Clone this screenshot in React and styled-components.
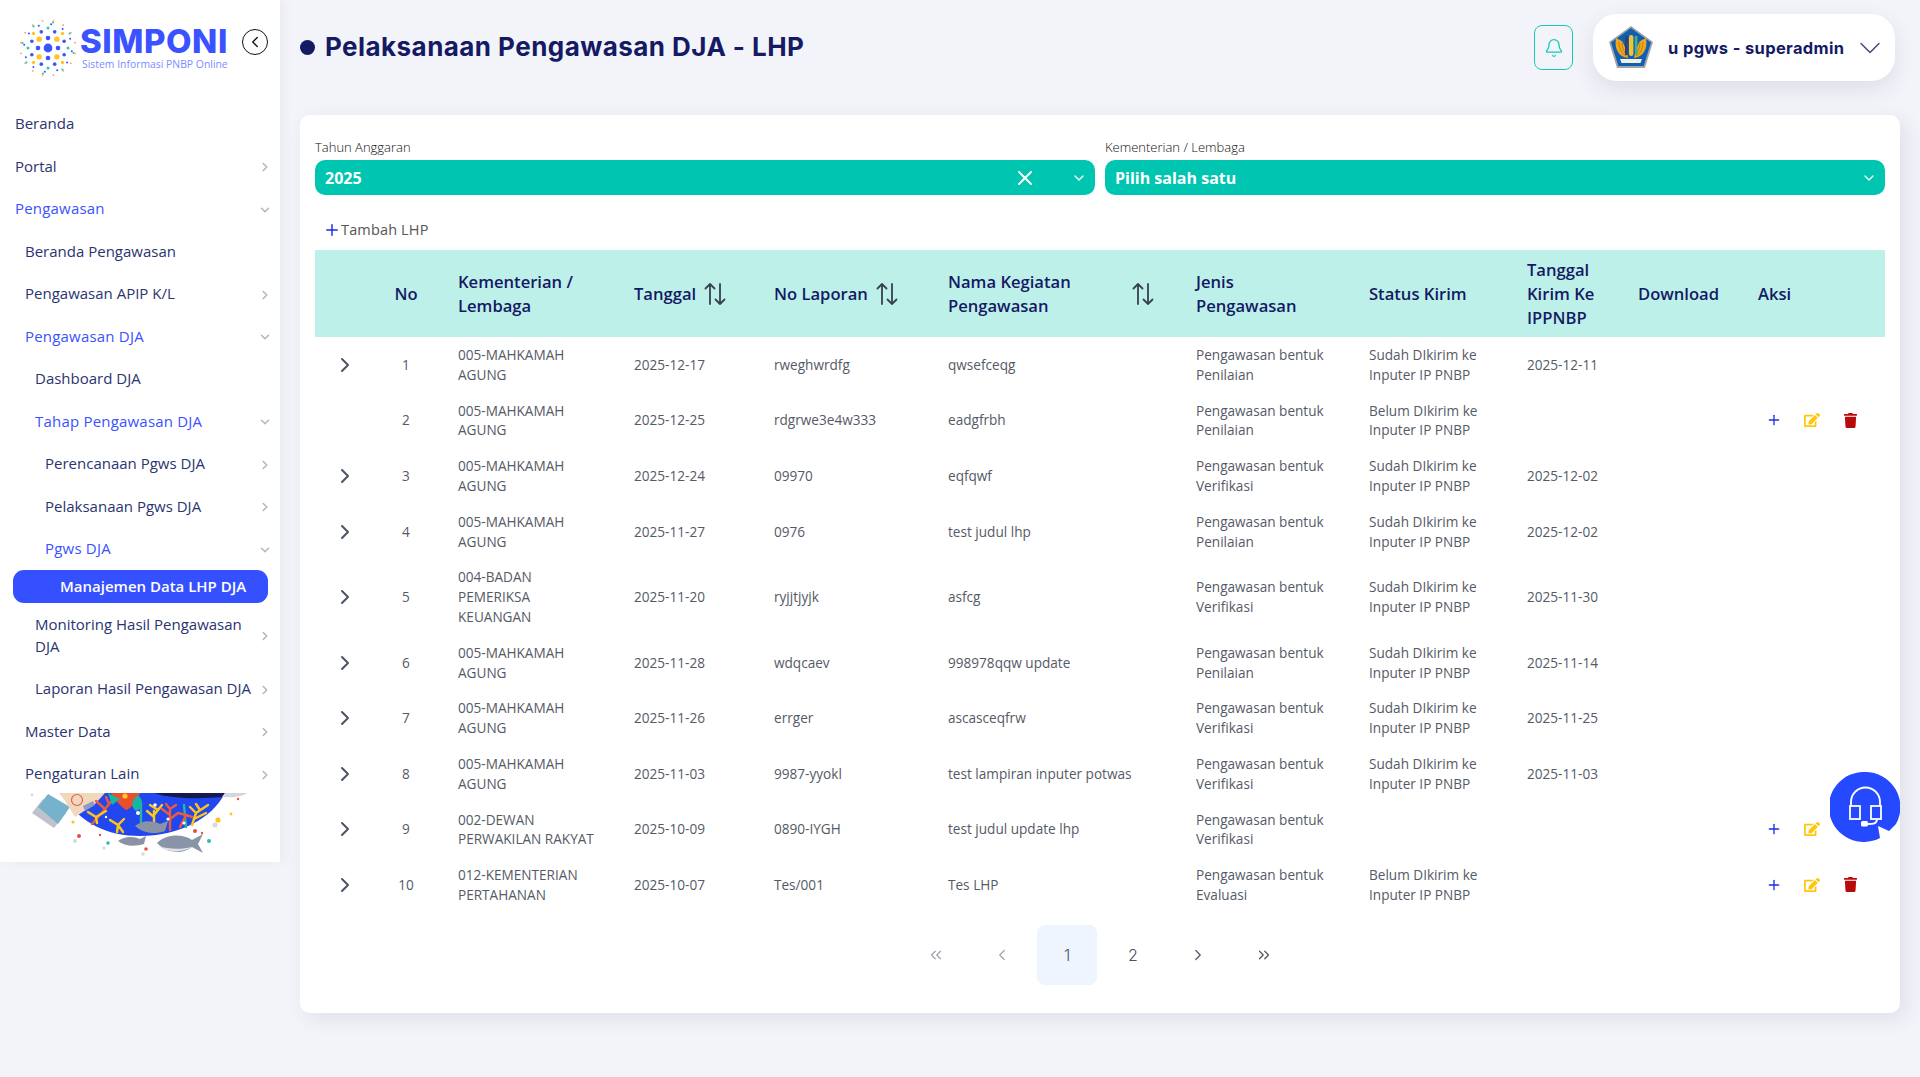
import React from 'react';
import styled, { createGlobalStyle } from 'styled-components';
import { Bell, ChevronDown, ChevronLeft, ChevronRight, ChevronsLeft, ChevronsRight, Plus, X } from 'lucide-react';
import { FaEdit, FaTrash } from 'react-icons/fa';

const GlobalStyle = createGlobalStyle`
  html, body {
    margin: 0;
    padding: 0;
    background: #f3f4f9;
    font-family: "Open Sans", "Liberation Sans", sans-serif;
  }
  * { box-sizing: border-box; }
`;

const Page = styled.div`
  position: relative;
  display: flex;
  align-items: flex-start;
  height: 1077px;
  overflow: hidden;
`;

const Sidebar = styled.aside`
  width: 280px;
  height: 862px;
  flex-shrink: 0;
  overflow: hidden;
  background: #fff;
  box-shadow: 4px 0 10px rgba(40, 50, 110, 0.05);
`;

const LogoRow = styled.div`
  display: flex;
  align-items: flex-start;
  height: 102px;
  padding: 18px 0 0 18px;
`;

const LogoText = styled.div`
  margin-left: 2px;
  width: 149px;
`;

const LogoTitle = styled.div`
  color: #3a52ff;
  font: 800 33px/32px Inter, "Liberation Sans", sans-serif;
  letter-spacing: 0.55px;
  margin-top: 7px;
`;

const LogoSub = styled.div`
  color: #7c8dff;
  font: 400 10.4px/14px "Open Sans", sans-serif;
  white-space: nowrap;
  margin-left: 2px;
`;

const BackButton = styled.button`
  width: 26px;
  height: 26px;
  margin: 11px 0 0 13px;
  padding: 0;
  border: 1.5px solid #111;
  border-radius: 50%;
  background: #fff;
  display: flex;
  align-items: center;
  justify-content: center;
  color: #111;
`;

const NavItem = styled.div`
  display: flex;
  align-items: center;
  justify-content: space-between;
  padding: 10.25px 8px 10.25px ${p => 15 + p.$level * 10}px;
  font-size: 15px;
  line-height: 22px;
  color: ${p => (p.$open ? '#3a52ff' : '#2b3470')};
  font-weight: ${p => (p.$open ? 500 : 400)};
  letter-spacing: ${p => (p.$open ? '0.2px' : '0')};
  svg { color: #b4b6be; flex-shrink: 0; margin: 3px 0 0 4px; }
`;

const NavText = styled.span`
  max-width: ${p => (p.$wrap ? '215px' : 'none')};
  white-space: ${p => (p.$wrap ? 'normal' : 'nowrap')};
`;

const ActiveItem = styled.div`
  margin: 0 12px 0 13px;
  height: 33px;
  padding-left: 47px;
  border-radius: 11px;
  background: #3550ff;
  color: #fff;
  font-size: 15px;
  font-weight: 600;
  line-height: 33px;
`;

const Illustration = styled.svg`
  display: block;
  width: 280px;
  height: 67px;
  margin-top: -2px;
`;

const Main = styled.main`
  flex: 1;
  padding: 0 20px 0 20px;
  min-width: 0;
`;

const TopBar = styled.header`
  display: flex;
  align-items: center;
  height: 115px;
  padding: 0 5px 20px 0;
`;

const Dot = styled.span`
  width: 15px;
  height: 15px;
  border-radius: 50%;
  background: #141a63;
  margin-right: 10px;
`;

const PageTitle = styled.h1`
  flex: 1;
  margin: -2px 0 0;
  color: #141a63;
  font: 700 26px/32px Inter, "Liberation Sans", sans-serif;
  letter-spacing: 0.45px;
`;

const BellButton = styled.button`
  width: 39px;
  height: 45px;
  padding: 0;
  border: 1px solid #14ccb6;
  border-radius: 8px;
  background: transparent;
  color: #14ccb6;
  display: flex;
  align-items: center;
  justify-content: center;
  margin: 0 20px 0 0;
`;

const Profile = styled.div`
  width: 302px;
  height: 67px;
  display: flex;
  align-items: center;
  padding: 0 15px;
  border-radius: 24px;
  background: #fff;
  box-shadow: 0 8px 22px rgba(60, 70, 120, 0.12);
  color: #141a63;
`;

const ProfileName = styled.span`
  flex: 1;
  margin-left: 14px;
  font: 700 16.5px/22px Inter, "Liberation Sans", sans-serif;
  letter-spacing: 0.35px;
  white-space: nowrap;
`;

const ProfileChevron = styled(ChevronDown)`
  margin: 0 -8px 0 -12px;
  flex-shrink: 0;
`;

const Card = styled.section`
  width: 1600px;
  height: 898px;
  padding: 25px 15px 0;
  border-radius: 10px;
  background: #fff;
  box-shadow: 6px 6px 20px rgba(50, 60, 110, 0.1);
`;

const Filters = styled.div`
  display: grid;
  grid-template-columns: 1fr 1fr;
  gap: 10px;
`;

const FieldLabel = styled.label`
  display: block;
  margin-bottom: 5px;
  font-size: 13px;
  font-weight: 300;
  line-height: 15px;
  color: #111;
`;

const Select = styled.div`
  height: 35px;
  display: flex;
  align-items: center;
  padding: 0 8px 0 10px;
  border-radius: 10px;
  background: #00c5b0;
  color: #fff;
  font-size: 16px;
  font-weight: 700;
`;

const SelectValue = styled.span`
  flex: 1;
`;

const ClearIcon = styled(X)`
  margin-right: 34px;
`;

const AddButton = styled.div`
  display: flex;
  align-items: center;
  height: 55px;
  padding: 14px 0 0 8px;
  color: #555;
  font-size: 14.5px;
  letter-spacing: 0.15px;
  svg { color: #1a2fe8; }
`;

const Table = styled.table`
  width: 1570px;
  border-collapse: collapse;
  table-layout: fixed;
`;

const HeadRow = styled.tr`
  background: #bef0ea;
  height: 87px;
`;

const Th = styled.th`
  padding: 0 8px;
  text-align: ${p => (p.$center ? 'center' : 'left')};
  color: #141a63;
  font-size: 16.6px;
  font-weight: 600;
  line-height: 24px;
`;

const SortHead = styled.div`
  display: flex;
  align-items: center;
  gap: 7px;
  width: ${p => (p.$wide ? '207px' : 'auto')};
  justify-content: ${p => (p.$wide ? 'space-between' : 'flex-start')};
  white-space: ${p => (p.$wide ? 'normal' : 'nowrap')};
  svg { flex-shrink: 0; }
`;

const Td = styled.td`
  padding: 8px ${p => (p.$narrow ? '28px' : '8px')} 8px 8px;
  text-align: ${p => (p.$center ? 'center' : 'left')};
  color: #555a66;
  font-size: 13.6px;
  line-height: 19.8px;
`;

const ExpandCell = styled.td`
  padding: 0 0 0 18px;
  color: #4b5563;
  line-height: 0;
`;

const Actions = styled.div`
  display: flex;
  align-items: center;
  gap: 22px;
  padding-left: 8px;
`;

const IconBtn = styled.span`
  display: inline-flex;
  width: 16px;
  justify-content: center;
  color: ${p => p.$color};
`;

const Pagination = styled.nav`
  display: flex;
  justify-content: center;
  gap: 5.6px;
  margin-top: 12px;
`;

const PageButton = styled.button`
  width: 60px;
  height: 60px;
  padding: 0;
  border: 0;
  border-radius: 8px;
  background: ${p => (p.$active ? '#eef5fe' : 'transparent')};
  color: ${p => (p.$disabled ? '#9ca3af' : '#4b5563')};
  font: 300 16px/60px Inter, sans-serif;
  display: flex;
  align-items: center;
  justify-content: center;
`;

const HelpButton = styled.svg`
  position: absolute;
  left: 1830px;
  top: 772px;
  width: 70px;
  height: 70px;
`;

const nav1 = [
  ['Beranda', 0, null],
  ['Portal', 0, 'r'],
  ['Pengawasan', 0, 'd', true],
  ['Beranda Pengawasan', 1, null],
  ['Pengawasan APIP K/L', 1, 'r'],
  ['Pengawasan DJA', 1, 'd', true],
  ['Dashboard DJA', 2, null],
  ['Tahap Pengawasan DJA', 2, 'd', true],
  ['Perencanaan Pgws DJA', 3, 'r'],
  ['Pelaksanaan Pgws DJA', 3, 'r'],
  ['Pgws DJA', 3, 'd', true],
];

const nav2 = [
  ['Monitoring Hasil Pengawasan DJA', 2, 'r', false, true],
  ['Laporan Hasil Pengawasan DJA', 2, 'r'],
  ['Master Data', 1, 'r'],
  ['Pengaturan Lain', 1, 'r'],
];

const rows = [
  { no: 1, kl: '005-MAHKAMAH AGUNG', tgl: '2025-12-17', lap: 'rweghwrdfg', nama: 'qwsefceqg', jenis: 'Penilaian', status: 'Sudah DIkirim ke Inputer IP PNBP', kirim: '2025-12-11', exp: true },
  { no: 2, kl: '005-MAHKAMAH AGUNG', tgl: '2025-12-25', lap: 'rdgrwe3e4w333', nama: 'eadgfrbh', jenis: 'Penilaian', status: 'Belum DIkirim ke Inputer IP PNBP', kirim: '', aksi: 'all' },
  { no: 3, kl: '005-MAHKAMAH AGUNG', tgl: '2025-12-24', lap: '09970', nama: 'eqfqwf', jenis: 'Verifikasi', status: 'Sudah DIkirim ke Inputer IP PNBP', kirim: '2025-12-02', exp: true },
  { no: 4, kl: '005-MAHKAMAH AGUNG', tgl: '2025-11-27', lap: '0976', nama: 'test judul lhp', jenis: 'Penilaian', status: 'Sudah DIkirim ke Inputer IP PNBP', kirim: '2025-12-02', exp: true },
  { no: 5, kl: '004-BADAN PEMERIKSA KEUANGAN', tgl: '2025-11-20', lap: 'ryjjtjyjk', nama: 'asfcg', jenis: 'Verifikasi', status: 'Sudah DIkirim ke Inputer IP PNBP', kirim: '2025-11-30', exp: true },
  { no: 6, kl: '005-MAHKAMAH AGUNG', tgl: '2025-11-28', lap: 'wdqcaev', nama: '998978qqw update', jenis: 'Penilaian', status: 'Sudah DIkirim ke Inputer IP PNBP', kirim: '2025-11-14', exp: true },
  { no: 7, kl: '005-MAHKAMAH AGUNG', tgl: '2025-11-26', lap: 'errger', nama: 'ascasceqfrw', jenis: 'Verifikasi', status: 'Sudah DIkirim ke Inputer IP PNBP', kirim: '2025-11-25', exp: true },
  { no: 8, kl: '005-MAHKAMAH AGUNG', tgl: '2025-11-03', lap: '9987-yyokl', nama: 'test lampiran inputer potwas', jenis: 'Verifikasi', status: 'Sudah DIkirim ke Inputer IP PNBP', kirim: '2025-11-03', exp: true },
  { no: 9, kl: '002-DEWAN PERWAKILAN RAKYAT', tgl: '2025-10-09', lap: '0890-IYGH', nama: 'test judul update lhp', jenis: 'Verifikasi', status: '', kirim: '', exp: true, aksi: 'edit' },
  { no: 10, kl: '012-KEMENTERIAN PERTAHANAN', tgl: '2025-10-07', lap: 'Tes/001', nama: 'Tes LHP', jenis: 'Evaluasi', status: 'Belum DIkirim ke Inputer IP PNBP', kirim: '', exp: true, aksi: 'all' },
];

const colWidths = [47, 88, 176, 140, 174, 248, 173, 158, 111, 120, 135];

// titik-titik logo, ring dari dalam ke luar
const logoRings = [
  { r: 10, n: 4, s: 2.3, c: '#3a52ff' },
  { r: 12.5, n: 4, s: 2.7, c: '#ffc61a', off: 0.5 },
  { r: 17.5, n: 8, s: 1.8, c: '#3a52ff', off: 0.5 },
  { r: 20, n: 4, s: 1.5, c: '#2ec9b7' },
  { r: 20.5, n: 4, s: 1.7, c: '#ffc61a', off: 0.5 },
  { r: 24, n: 12, s: 1, c: '#3a52ff', off: 0.25 },
  { r: 26, n: 8, s: 1.1, c: '#2ec9b7', off: 0.25 },
  { r: 27.5, n: 16, s: 0.9, c: '#f0998a', off: 0.5 },
];

const LogoMark = () => (
  <svg width="60" height="60" viewBox="-30 -30 60 60">
    <circle r="4.4" fill="#3a52ff" />
    {logoRings.map((ring, i) =>
      Array.from({ length: ring.n }).map((_, k) => {
        const a = ((k + (ring.off || 0)) / ring.n) * Math.PI * 2;
        return <circle key={i + '-' + k} cx={Math.cos(a) * ring.r} cy={Math.sin(a) * ring.r} r={ring.s} fill={ring.c} />;
      })
    )}
  </svg>
);

const KemenkeuLogo = () => (
  <svg width="46" height="46" viewBox="0 0 46 46">
    <path d="M23 1 L45 17 L37 43 L9 43 L1 17 Z" fill="#a3a3a3" />
    <path d="M23 3 L43 17.5 L35.6 41 L10.4 41 L3 17.5 Z" fill="#0f5fb3" />
    <path d="M20 33 C11 32 6 24 8 13 C12 15 15 16 16 20 C18 24 19 28 20 33 Z" fill="#f2a81d" />
    <path d="M26 33 C35 32 40 24 38 13 C34 15 31 16 30 20 C28 24 27 28 26 33 Z" fill="#f2a81d" />
    <path d="M11 17 C11 24 14 29 18 31 M14 18 C14 23 16 27 19 30 M35 17 C35 24 32 29 28 31 M32 18 C32 23 30 27 27 30" fill="none" stroke="#b5710f" strokeWidth="0.8" />
    <rect x="21" y="10" width="4.4" height="21" rx="2.2" fill="#f6c230" />
    <rect x="17" y="11" width="2.6" height="19" fill="#34406f" />
    <rect x="26.8" y="11" width="2.6" height="19" fill="#43b08a" />
    <path d="M12 34 H34 L32.5 38 H13.5 Z" fill="#f4f1dc" />
  </svg>
);

const Arrows = () => (
  <svg width="24" height="24" viewBox="0 0 24 24" fill="none" stroke="#374151" strokeWidth="1.8" strokeLinecap="round" strokeLinejoin="round">
    <path d="M7 22V2M2.5 6.5L7 2l4.5 4.5" />
    <path d="M17 2v20M12.5 17.5L17 22l4.5-4.5" />
  </svg>
);

const Coral = () => (
  <Illustration viewBox="0 0 280 67">
    <path d="M60 0 H225 C212 26 178 43 140 43 C108 43 82 32 60 0 Z" fill="#2347ee" />
    <path d="M154 0 H225 L222 4 C200 6 172 6 154 0 Z" fill="#141a50" />
    <path d="M225 0 H247 C244 3 234 5 222 4 Z" fill="#d5d7de" />
    <path d="M43 6 L66 20 L54 35 L32 20 Z" fill="#bfc2cc" />
    <path d="M48 1 L70 14 L58 31 L38 14 Z" fill="#76b2cb" />
    <path d="M60 0 H105 L95 11 L75 24 Z" fill="#f1d8bd" />
    <circle cx="77" cy="7" r="5.5" fill="none" stroke="#d9684f" strokeWidth="1.2" />
    <path d="M83 13 L93 8 L95 12 L85 18 Z" fill="#8e9bc9" />
    <g fill="none" strokeWidth="2.4" strokeLinecap="round">
      <path d="M92 31 L105 16 L115 4 M105 16 L96 8 M109 11 L106 4" stroke="#ef5a3a" />
      <path d="M88 19 L96 24 L106 18 M96 24 L97 30" stroke="#ffc61a" />
      <path d="M110 27 L118 32 L123 39 M118 32 L124 26 M117 39 L118 32" stroke="#ffc61a" />
      <path d="M141 11 V32" stroke="#22b7a6" />
      <path d="M154 36 V18 M154 24 L147 18 M154 22 L162 12 M158 17 L150 12" stroke="#ffc61a" />
      <path d="M170 37 V16 M170 22 L162 16 M170 26 L178 20 M170 16 L166 11 M170 16 L176 12" stroke="#ef5a3a" />
      <path d="M186 34 L184 12" stroke="#22b7a6" />
      <path d="M192 32 L196 20 L208 12 M196 20 L190 14 M200 17 L196 11 M194 26 L206 20" stroke="#ffc61a" />
      <path d="M180 34 L186 22 L178 20 M186 22 L192 24" stroke="#ef5a3a" />
    </g>
    <path d="M111 0 H140 C136 10 130 16 126 17 C122 14 115 8 111 0 Z" fill="#ea4f2c" />
    <path d="M108 0 L120 6 L112 12 Z M138 2 C144 8 144 15 136 18 C130 14 132 6 138 2 Z" fill="#16b5a4" />
    <circle cx="125" cy="3" r="2.6" fill="#ffc61a" />
    <path d="M135 33 C142 27 152 27 160 31 L168 28 L165 38 C154 42 143 40 135 33 Z" fill="#8a93a6" />
    <path d="M118 48 C124 43 134 43 140 46 L146 43 L144 51 C134 54 124 53 118 48 Z" fill="#8a93a6" />
    <path d="M157 50 C165 41 183 40 192 47 L203 41 L198 51 L203 60 L192 54 C182 62 166 60 157 50 Z" fill="#8994a8" />
    <path d="M158 53 C168 60 182 60 192 54 C180 57 168 56 158 53 Z" fill="#dfe2ea" />
    <g fill="#fff">
      <circle cx="138" cy="20" r="2" />
      <circle cx="155" cy="12" r="1.8" />
      <circle cx="168" cy="26" r="1.6" />
      <circle cx="184" cy="30" r="1.6" />
      <circle cx="106" cy="24" r="1.2" />
    </g>
    <circle cx="79" cy="43" r="2" fill="#e5533d" />
    <circle cx="100" cy="42" r="1.2" fill="#e5533d" />
    <circle cx="108" cy="50" r="1.8" fill="#22c1ad" />
    <circle cx="146" cy="56" r="1.8" fill="#e5533d" />
    <circle cx="209" cy="48" r="2" fill="#22c1ad" />
    <circle cx="195" cy="38" r="2" fill="#e5533d" />
    <circle cx="202" cy="40" r="1.2" fill="#e5533d" />
    <circle cx="218" cy="27" r="2.6" fill="#ffc61a" />
    <circle cx="215" cy="32" r="2.6" fill="#d7d9e0" />
    <circle cx="73" cy="29" r="1.6" fill="#ffc61a" />
    <circle cx="75" cy="48" r="2" fill="#d7d9e0" />
    <circle cx="104" cy="55" r="1.6" fill="#d7d9e0" />
    <circle cx="143" cy="61" r="1.8" fill="#d7d9e0" />
    <circle cx="231" cy="21" r="1.4" fill="#ffc61a" />
    <circle cx="238" cy="6" r="1.2" fill="#e5533d" />
    <circle cx="32" cy="2" r="1.4" fill="#d7d9e0" />
  </Illustration>
);

const Help = () => (
  <HelpButton viewBox="0 0 70 70">
    <path d="M35 0 A35 35 0 0 1 66 52 L59 59 L48 54 L50 66 A35 35 0 1 1 35 0 Z" fill="#2449ff" />
    <g fill="none" stroke="#fff" strokeWidth="1.8">
      <path d="M21 34 V30 A14.5 14.5 0 0 1 50 30 V34" />
      <rect x="20" y="34" width="10" height="13" />
      <rect x="41" y="34" width="10" height="13" />
      <path d="M47 47 C47 52 43 52 38 52" />
    </g>
    <rect x="31" y="49" width="7" height="5.5" rx="1.5" fill="#fff" />
  </HelpButton>
);

const ActionIcons = ({ type }) => (
  <Actions>
    <IconBtn $color="#1a2fe8"><Plus size={18} strokeWidth={2} /></IconBtn>
    <IconBtn $color="#ffc60a"><FaEdit size={16} /></IconBtn>
    {type === 'all' && <IconBtn $color="#b80c0c"><FaTrash size={15} /></IconBtn>}
  </Actions>
);

const Nav = ({ item }) => {
  const [label, level, arrow, open, wrap] = item;
  return (
    <NavItem $level={level} $open={open}>
      <NavText $wrap={wrap}>{label}</NavText>
      {arrow === 'r' && <ChevronRight size={14} strokeWidth={2.6} />}
      {arrow === 'd' && <ChevronDown size={14} strokeWidth={2.6} />}
    </NavItem>
  );
};

const App = () => (
  <Page>
    <GlobalStyle />
    <Sidebar>
      <LogoRow>
        <LogoMark />
        <LogoText>
          <LogoTitle>SIMPONI</LogoTitle>
          <LogoSub>Sistem Informasi PNBP Online</LogoSub>
        </LogoText>
        <BackButton><ChevronLeft size={18} strokeWidth={1.8} /></BackButton>
      </LogoRow>
      {nav1.map(item => <Nav key={item[0]} item={item} />)}
      <ActiveItem>Manajemen Data LHP DJA</ActiveItem>
      {nav2.map(item => <Nav key={item[0]} item={item} />)}
      <Coral />
    </Sidebar>

    <Main>
      <TopBar>
        <Dot />
        <PageTitle>Pelaksanaan Pengawasan DJA - LHP</PageTitle>
        <BellButton><Bell size={20} strokeWidth={1.6} /></BellButton>
        <Profile>
          <KemenkeuLogo />
          <ProfileName>u pgws - superadmin</ProfileName>
          <ProfileChevron size={36} strokeWidth={0.9} color="#3a4178" />
        </Profile>
      </TopBar>

      <Card>
        <Filters>
          <div>
            <FieldLabel>Tahun Anggaran</FieldLabel>
            <Select>
              <SelectValue>2025</SelectValue>
              <ClearIcon size={24} strokeWidth={2} />
              <ChevronDown size={16} strokeWidth={2} />
            </Select>
          </div>
          <div>
            <FieldLabel>Kementerian / Lembaga</FieldLabel>
            <Select>
              <SelectValue>Pilih salah satu</SelectValue>
              <ChevronDown size={16} strokeWidth={2} />
            </Select>
          </div>
        </Filters>

        <AddButton><Plus size={18} strokeWidth={2} />Tambah LHP</AddButton>

        <Table>
          <colgroup>
            {colWidths.map((w, i) => <col key={i} style={{ width: w }} />)}
          </colgroup>
          <thead>
            <HeadRow>
              <Th />
              <Th $center>No</Th>
              <Th>Kementerian / Lembaga</Th>
              <Th><SortHead>Tanggal <Arrows /></SortHead></Th>
              <Th><SortHead>No Laporan <Arrows /></SortHead></Th>
              <Th><SortHead $wide>Nama Kegiatan Pengawasan <Arrows /></SortHead></Th>
              <Th>Jenis<br />Pengawasan</Th>
              <Th>Status Kirim</Th>
              <Th>Tanggal Kirim Ke IPPNBP</Th>
              <Th>Download</Th>
              <Th>Aksi</Th>
            </HeadRow>
          </thead>
          <tbody>
            {rows.map(r => (
              <tr key={r.no}>
                <ExpandCell>{r.exp && <ChevronRight size={24} strokeWidth={2} />}</ExpandCell>
                <Td $center>{r.no}</Td>
                <Td $narrow>{r.kl}</Td>
                <Td>{r.tgl}</Td>
                <Td>{r.lap}</Td>
                <Td>{r.nama}</Td>
                <Td>Pengawasan bentuk {r.jenis}</Td>
                <Td>{r.status}</Td>
                <Td>{r.kirim}</Td>
                <Td />
                <Td>{r.aksi && <ActionIcons type={r.aksi} />}</Td>
              </tr>
            ))}
          </tbody>
        </Table>

        <Pagination>
          <PageButton $disabled><ChevronsLeft size={18} strokeWidth={1.6} /></PageButton>
          <PageButton $disabled><ChevronLeft size={18} strokeWidth={1.6} /></PageButton>
          <PageButton $active>1</PageButton>
          <PageButton>2</PageButton>
          <PageButton><ChevronRight size={18} strokeWidth={1.6} /></PageButton>
          <PageButton><ChevronsRight size={18} strokeWidth={1.6} /></PageButton>
        </Pagination>
      </Card>
    </Main>
    <Help />
  </Page>
);

export default App;
